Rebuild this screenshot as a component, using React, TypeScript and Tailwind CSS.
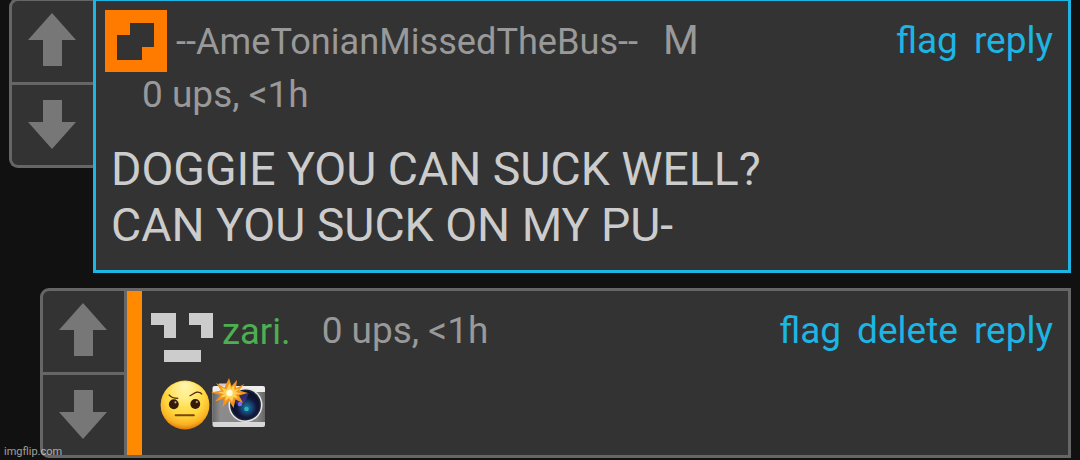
import type { ReactNode } from 'react'

function UpArrow() {
  return (
    <svg viewBox="0 0 48 53" className="w-12 h-[53px]">
      <path d="M24 0 48 27H34V53H15V27H0Z" fill="#777" />
    </svg>
  )
}

function DownArrow() {
  return (
    <svg viewBox="0 0 48 49" className="w-12 h-[49px]">
      <path d="M15 0H34V22H48L24 49 0 22H15Z" fill="#777" />
    </svg>
  )
}

function VoteBox() {
  return (
    <div className="flex flex-col w-[81px] h-full">
      <div className="flex justify-center pt-3 h-[81px] pr-[1px]">
        <UpArrow />
      </div>
      <div className="flex justify-center pt-[15px] flex-1 border-t-3 border-[#666] pr-[1px]">
        <DownArrow />
      </div>
    </div>
  )
}

function OrangeIcon() {
  return (
    <svg viewBox="0 0 62 62" className="w-[62px] h-[62px] shrink-0" shapeRendering="crispEdges">
      <path d="M0 0H62V62H0Z" fill="#ff7b00" />
      <path d="M25 13H49V37H37V50H12V25H25Z" fill="#333" />
    </svg>
  )
}

function FaceIcon() {
  return (
    <svg viewBox="0 0 62 62" className="w-[62px] h-[62px] shrink-0" shapeRendering="crispEdges">
      <path d="M0 13H25V38H13V25H0ZM38 13H62V38H50V25H38ZM13 50H50V62H13Z" fill="#ccc" />
    </svg>
  )
}

function RaisedBrow() {
  return (
    <svg viewBox="0 0 50 50" className="w-[50px] h-[50px]">
      <defs>
        <radialGradient id="skin" cx="0.5" cy="0.34" r="0.66">
          <stop offset="0" stopColor="#ffe96a" />
          <stop offset="0.6" stopColor="#ffd53c" />
          <stop offset="0.85" stopColor="#fbb022" />
          <stop offset="1" stopColor="#dd7a08" />
        </radialGradient>
        <radialGradient id="shine" cx="0.5" cy="0.1" r="0.45">
          <stop offset="0" stopColor="#fff6b0" />
          <stop offset="1" stopColor="#fff6b0" stopOpacity="0" />
        </radialGradient>
      </defs>
      <circle cx="25" cy="25" r="24.4" fill="url(#skin)" />
      <circle cx="25" cy="25" r="23.5" fill="url(#shine)" />
      <ellipse cx="13.8" cy="24.3" rx="4.9" ry="5" fill="#331a0a" />
      <ellipse cx="35.3" cy="24" rx="4.9" ry="5" fill="#331a0a" />
      <circle cx="15.4" cy="22.3" r="1.1" fill="#c9a88b" />
      <circle cx="36.8" cy="22" r="1.1" fill="#c9a88b" />
      <path d="M8.8 14.6C11 17.6 14 18.4 18.2 18.4" fill="none" stroke="#4d2a08" strokeWidth="1.3" />
      <path d="M29.6 15.8C33 15 34 12.6 37 12.1 39.5 11.8 41 12.4 42 14.4" fill="none" stroke="#4d2a08" strokeWidth="1.3" />
      <path d="M15.6 35.3H33.8" stroke="#7a4409" strokeWidth="2" strokeLinecap="round" />
    </svg>
  )
}

function FlashCamera() {
  return (
    <svg viewBox="0 0 54 50" className="w-[54px] h-[50px] overflow-visible">
      <defs>
        <linearGradient id="shell" x2="0" y2="1">
          <stop offset="0" stopColor="#efefef" />
          <stop offset="1" stopColor="#d6d6d6" />
        </linearGradient>
        <linearGradient id="grip">
          <stop offset="0" stopColor="#666" />
          <stop offset="0.15" stopColor="#8c8c8c" />
          <stop offset="0.85" stopColor="#858585" />
          <stop offset="1" stopColor="#666" />
        </linearGradient>
        <radialGradient id="lens" cx="0.55" cy="0.6">
          <stop offset="0" stopColor="#147f9c" />
          <stop offset="0.35" stopColor="#174a78" />
          <stop offset="0.7" stopColor="#12173f" />
          <stop offset="1" stopColor="#0a1128" />
        </radialGradient>
      </defs>
      <path d="M6 7 7 3.5H15L17 7Z" fill="#cfcfcf" />
      <rect x="0.5" y="6" width="52.5" height="41" rx="2" fill="url(#shell)" />
      <path d="M0.5 12H53V42H0.5Z" fill="url(#grip)" />
      <circle cx="33.5" cy="25" r="17" fill="#e6e6e6" />
      <circle cx="33.5" cy="25" r="15.4" fill="#1b2130" />
      <circle cx="33.5" cy="25" r="13.8" fill="url(#lens)" />
      <path d="M23 22Q27 13 37 13L34 20 27 27Z" fill="#4a3f9c" opacity=".55" />
      <circle cx="28" cy="24" r="2.2" fill="#7a6fe8" />
      <circle cx="34.5" cy="29" r="2.3" fill="#2bb3bf" />
      <path d="M17 -2 19.5 6 25 0 24 8 32.5 4 27 10.5 36 13 27 15.5 31 23 23.5 19.5 21.5 28 17 20.5 10.5 27 12 18.5 3 21.5 9 15 -1 12.5 9 10.5 4 3 12.5 7.5Z" fill="#f3951d" />
      <path d="M17.5 3 19 8.5 22.5 5 22 10 27.5 8.5 23.5 12 29 13.5 23.5 14.5 26 18.5 21.5 17 20 22 17 18 13 21 14 16.5 8 17.5 12 14 6 12.5 12 11.5 9 7.5 14.5 9.5Z" fill="#ffd257" />
      <circle cx="17.5" cy="13" r="3.2" fill="#fff9d5" />
    </svg>
  )
}

function Actions({ items }: { items: string[] }) {
  return (
    <div className="flex gap-4 text-[#1cb5e4] text-[37px] leading-10">
      {items.map(item => <a key={item}>{item}</a>)}
    </div>
  )
}

function Shell({ children }: { children: ReactNode }) {
  return (
    <main className="relative w-[1080px] h-[460px] overflow-hidden bg-[#111] text-[#999] font-[Roboto,sans-serif]">
      {children}
    </main>
  )
}

export default function App() {
  return (
    <Shell>
      <article className="flex items-start h-[275px] ml-[9px] -mt-[2px]">
        <div className="w-[84px] h-[170px] border-3 border-r-0 border-[#666] rounded-l-[9px] bg-[#333]">
          <VoteBox />
        </div>
        <div className="w-[978px] h-[275px] border-3 border-[#1cb5e4] bg-[#333] pt-[9px] pl-[9px] pr-[15px]">
          <header className="flex h-[62px]">
            <OrangeIcon />
            <span className="ml-[9px] mt-3 text-[36.15px] leading-10">--AmeTonianMissedTheBus--</span>
            <span className="ml-[25px] mt-[10px] text-[41px] leading-10">M</span>
            <div className="ml-auto mt-[11px]">
              <Actions items={['flag', 'reply']} />
            </div>
          </header>
          <div className="ml-[37px] mt-[3px] text-[37px] leading-10">0 ups, &lt;1h</div>
          <p className="ml-[6px] mt-[26px] text-[46.4px] leading-14 text-[#ccc]">
            DOGGIE YOU CAN SUCK WELL?<br />
            CAN YOU SUCK ON MY PU-
          </p>
        </div>
      </article>

      <article className="flex w-[1031px] h-[170px] mt-[15px] ml-10 border-3 border-[#666] rounded-l-[9px] bg-[#333]">
        <VoteBox />
        <div className="w-[18px] border-l-3 border-[#666] bg-[#ff8a00]" />
        <div className="flex-1 pl-[9px] pr-[15px] pt-[9px]">
          <header className="flex h-[62px]">
            <FaceIcon />
            <span className="ml-[9px] mt-3 text-[36.4px] leading-10 text-[#4caf50]">zari.</span>
            <span className="ml-[31px] mt-[11px] text-[37px] leading-10">0 ups, &lt;1h</span>
            <div className="ml-auto mt-[11px]">
              <Actions items={['flag', 'delete', 'reply']} />
            </div>
          </header>
          <div className="flex gap-[2px] ml-[9px] mt-[18px]">
            <RaisedBrow />
            <FlashCamera />
          </div>
        </div>
      </article>

      <span className="absolute left-1 bottom-[1px] text-[11px] leading-[14px] text-white/60">imgflip.com</span>
    </Shell>
  )
}
